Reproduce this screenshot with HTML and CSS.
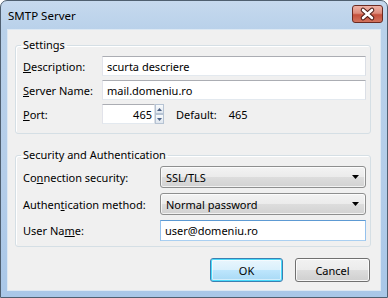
FILE: index.html
```html
<!DOCTYPE html>
<html>
<head>
<meta charset="utf-8">
<link rel="stylesheet" href="styles.css">
</head>
<body>
<div class="window">
  <div class="titlebar">
    <span class="title">SMTP Server</span>
    <div class="close">
      <svg width="31" height="18" viewBox="0 0 31 18">
        <path d="M11 5 L20 13 M20 5 L11 13" stroke="#4a1a14" stroke-width="4.6" stroke-linecap="round" fill="none"/>
        <path d="M11 5 L20 13 M20 5 L11 13" stroke="#ffffff" stroke-width="2.6" stroke-linecap="round" fill="none"/>
      </svg>
    </div>
  </div>
  <div class="client">
    <fieldset class="group">
      <legend>Settings</legend>
      <div class="grid grid1">
        <span class="lbl"><u>D</u>escription:</span>
        <div class="tb">scurta descriere</div>
        <span class="lbl"><u>S</u>erver Name:</span>
        <div class="tb">mail.domeniu.ro</div>
        <span class="lbl"><u>P</u>ort:</span>
        <div class="port">
          <div class="tb num">465</div>
          <div class="spin">
            <div class="sbtn"><svg width="5" height="3" viewBox="0 0 5 3"><path d="M0 3 L2.5 0 L5 3 Z" fill="#4c6185"/></svg></div>
            <div class="sbtn"><svg width="5" height="3" viewBox="0 0 5 3"><path d="M0 0 L2.5 3 L5 0 Z" fill="#4c6185"/></svg></div>
          </div>
          <span class="deflbl">Default:</span>
          <span class="defval">465</span>
        </div>
      </div>
    </fieldset>
    <fieldset class="group group2">
      <legend>Security and Authentication</legend>
      <div class="grid grid2">
        <span class="lbl">Co<u>n</u>nection security:</span>
        <div class="sel"><span>SSL/TLS</span><svg width="7" height="4" viewBox="0 0 7 4"><path d="M0 0 L7 0 L3.5 4 Z" fill="#000"/></svg></div>
        <span class="lbl">Authen<u>t</u>ication method:</span>
        <div class="sel"><span>Normal password</span><svg width="7" height="4" viewBox="0 0 7 4"><path d="M0 0 L7 0 L3.5 4 Z" fill="#000"/></svg></div>
        <span class="lbl">User Na<u>m</u>e:</span>
        <div class="tb focus">user@domeniu.ro</div>
      </div>
    </fieldset>
    <div class="buttons">
      <div class="btn default">OK</div>
      <div class="btn cancel">Cancel</div>
    </div>
  </div>
</div>
</body>
</html>
```

FILE: styles.css
```css
html, body {
  margin: 0;
  padding: 0;
  background: #ffffff;
}
body {
  font-family: "Noto Sans", "Open Sans", sans-serif;
  font-size: 11px;
  color: #000;
}
.window {
  width: 388px;
  height: 298px;
  box-sizing: border-box;
  border: 1px solid #4f5f70;
  border-radius: 7px 7px 0 0;
  background: linear-gradient(#c6d9ee 0px, #b9d1ea 28px, #b4cde9 60%, #a9c7e8 100%);
  display: flex;
  flex-direction: column;
}
.titlebar {
  height: 29px;
  flex: none;
  display: flex;
  justify-content: space-between;
  padding: 0 4px 0 7px;
}
.title {
  line-height: 29px;
  font-size: 11.5px;
  color: #000;
}
.close {
  margin-top: 4px;
  width: 31px;
  height: 18px;
  box-sizing: border-box;
  border: 1px solid #6a2a22;
  border-radius: 3px;
  background: linear-gradient(#efb2a6 0%, #dd8c7c 45%, #c4503c 55%, #d2735e 100%);
  display: flex;
  align-items: center;
  justify-content: center;
  overflow: hidden;
}
.close svg {
  display: block;
  flex: none;
  margin: -1px;
}
.client {
  flex: 1;
  margin: 0 7px 7px;
  background: #f0f0f0;
  box-shadow: 0 0 0 1px #dde8f3;
  padding: 7px 9px 8px 7px;
  display: flex;
  flex-direction: column;
}
.group {
  margin: 0;
  min-width: 0;
  border: 1px solid #d5dfe5;
  border-radius: 3px;
  box-shadow: inset 1px 1px 0 #ffffff;
  padding: 3px 4px 9px 7px;
}
.group2 {
  margin-top: 13px;
  padding-bottom: 5px;
}
legend {
  padding: 0 2px;
  margin-left: -2px;
  line-height: 16px;
}
.grid {
  display: grid;
  align-items: center;
}
.grid1 {
  grid-template-columns: 79px 1fr;
  row-gap: 4px;
}
.grid2 {
  grid-template-columns: 137px 1fr;
  row-gap: 5px;
}
.lbl {
  white-space: nowrap;
}
.tb {
  height: 20px;
  box-sizing: border-box;
  border: 1px solid;
  border-color: #abadb3 #dbdfe6 #e3e9ef #e2e3ea;
  background: #ffffff;
  padding: 0 4px;
  display: flex;
  align-items: center;
  white-space: nowrap;
}
.tb.focus {
  height: 21px;
  border-color: #5d9ad3 #94c1ed #a9cff1 #94c1ed;
}
.port {
  display: flex;
  align-items: center;
}
.num {
  width: 53px;
  justify-content: flex-end;
  padding: 0 2px;
}
.spin {
  width: 9px;
  height: 20px;
  display: flex;
  flex-direction: column;
}
.sbtn {
  flex: 1;
  box-sizing: border-box;
  border: 1px solid #b6c3d3;
  background: linear-gradient(#f8fafc, #dfe6ef);
  display: flex;
  align-items: center;
  justify-content: center;
}
.sbtn svg {
  display: block;
}
.deflbl {
  margin-left: 12px;
}
.defval {
  margin-left: 12px;
}
.sel {
  height: 22px;
  box-sizing: border-box;
  border: 1px solid #8e8f8f;
  border-radius: 3px;
  background: linear-gradient(#f3f3f3 0%, #ebebeb 50%, #dddddd 50%, #d2d2d2 100%);
  box-shadow: inset 0 0 0 1px rgba(255,255,255,0.7);
  padding: 0 6px 0 5px;
  display: flex;
  align-items: center;
  justify-content: space-between;
}
.sel svg {
  display: block;
}
.buttons {
  margin-top: 11px;
  display: flex;
  justify-content: flex-end;
  gap: 12px;
  padding-right: 1px;
}
.btn {
  height: 24px;
  box-sizing: border-box;
  border: 1px solid #707070;
  border-radius: 3px;
  background: linear-gradient(#f2f2f2 0%, #ebebeb 50%, #dddddd 50%, #cfcfcf 100%);
  box-shadow: inset 0 0 0 1px rgba(255,255,255,0.8);
  display: flex;
  align-items: center;
  justify-content: center;
}
.btn.default {
  width: 73px;
  border-color: #3c7fb1;
  box-shadow: inset 0 0 0 1px #48dbfb, inset 0 0 0 2px rgba(255,255,255,0.5);
  background: linear-gradient(#eaf6fd 0%, #d9f0fc 50%, #bee6fd 50%, #a7d9f5 100%);
}
.btn.cancel {
  width: 75px;
}
```
